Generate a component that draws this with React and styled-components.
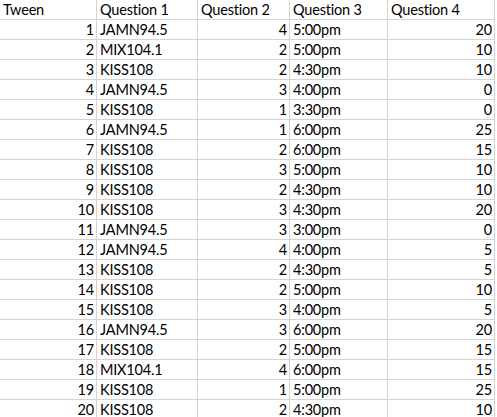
import React from "react";
import styled, { createGlobalStyle } from "styled-components";

const GlobalStyle = createGlobalStyle`
  html, body {
    margin: 0;
    padding: 0;
    background: #fff;
  }
`;

const rows = [
  [1, "JAMN94.5", 4, "5:00pm", 20],
  [2, "MIX104.1", 2, "5:00pm", 10],
  [3, "KISS108", 2, "4:30pm", 10],
  [4, "JAMN94.5", 3, "4:00pm", 0],
  [5, "KISS108", 1, "3:30pm", 0],
  [6, "JAMN94.5", 1, "6:00pm", 25],
  [7, "KISS108", 2, "6:00pm", 15],
  [8, "KISS108", 3, "5:00pm", 10],
  [9, "KISS108", 2, "4:30pm", 10],
  [10, "KISS108", 3, "4:30pm", 20],
  [11, "JAMN94.5", 3, "3:00pm", 0],
  [12, "JAMN94.5", 4, "4:00pm", 5],
  [13, "KISS108", 2, "4:30pm", 5],
  [14, "KISS108", 2, "5:00pm", 10],
  [15, "KISS108", 3, "4:00pm", 5],
  [16, "JAMN94.5", 3, "6:00pm", 20],
  [17, "KISS108", 2, "5:00pm", 15],
  [18, "MIX104.1", 4, "6:00pm", 15],
  [19, "KISS108", 1, "5:00pm", 25],
  [20, "KISS108", 2, "4:30pm", 10],
];

const headers = ["Tween", "Question 1", "Question 2", "Question 3", "Question 4"];

export default () => {
  return (
    <>
      <GlobalStyle />
      <Sheet>
        {headers.map(h => (
          <Cell key={h}>{h}</Cell>
        ))}
        {rows.map(row =>
          row.map((value, i) => (
            <Cell key={`${row[0]}-${i}`} numeric={typeof value === "number"}>
              {value}
            </Cell>
          ))
        )}
      </Sheet>
    </>
  );
};

// column widths include the 1px gridline on the right
const Sheet = styled.div`
  display: grid;
  grid-template-columns: 97px 101px 92px 98px 107px;
  grid-auto-rows: 20px;
  width: 495px;
  font-family: "Lato", "Liberation Sans", sans-serif;
  font-size: 14.5px;
  letter-spacing: -0.2px;
  color: #000;
`;

const Cell = styled.div.withConfig({
  shouldForwardProp: prop => prop !== "numeric",
})`
  border-right: 1px solid #d4d4d4;
  border-bottom: 1px solid #d4d4d4;
  padding: 0 2px 1px 3px;
  display: flex;
  align-items: flex-end;
  justify-content: ${p => (p.numeric ? "flex-end" : "flex-start")};
  line-height: 17px;
  white-space: nowrap;
  overflow: hidden;
`;
